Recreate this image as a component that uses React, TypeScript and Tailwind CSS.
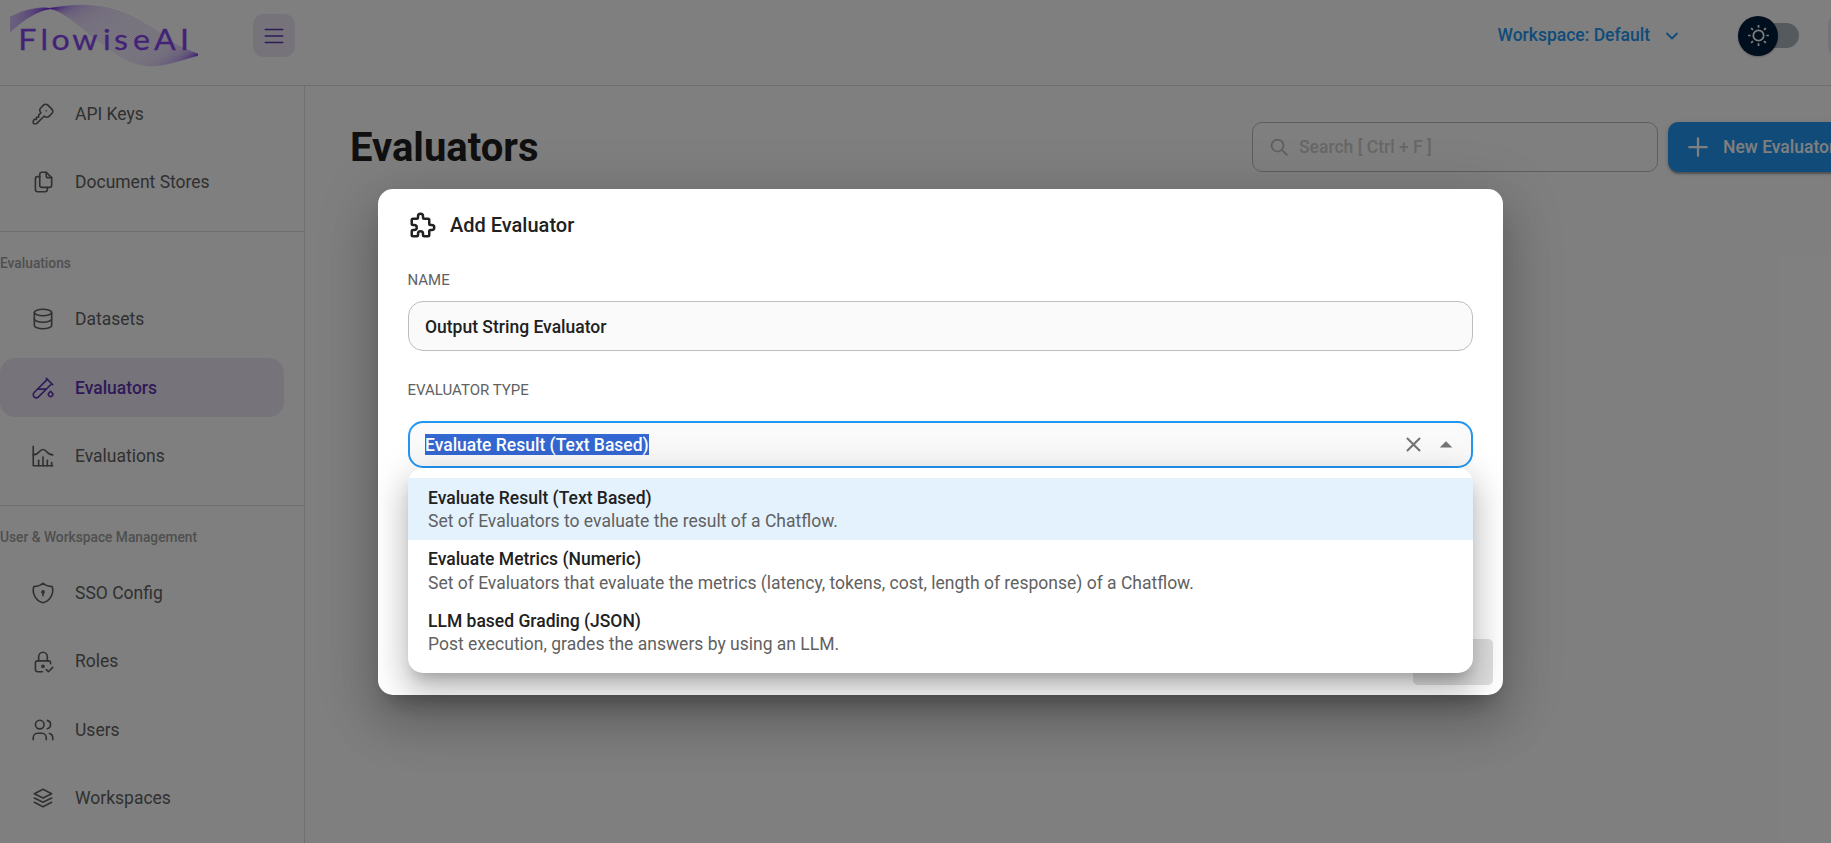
import type { ReactNode } from 'react'
import type { IconType } from 'react-icons'
import {
  TbChartHistogram,
  TbChevronDown,
  TbDatabase,
  TbFiles,
  TbKey,
  TbLockCheck,
  TbMenu2,
  TbPlus,
  TbPuzzle,
  TbSearch,
  TbShieldLock,
  TbStack2,
  TbTestPipe,
  TbUsers,
} from 'react-icons/tb'

type Point = [number, number]

const WAVE_A: Point[] = [[10, 32], [28, 18], [50, 8.5], [85, 5.3], [118, 11], [150, 27], [175, 44], [198, 54]]
const WAVE_B: Point[] = [[10, 17], [28, 10], [50, 8.5], [72, 20], [100, 42], [130, 61], [158, 65.5], [198, 55.5]]
const WAVE_LINES = 26

function smoothPath(points: Point[]): string {
  let d = `M${points[0][0]} ${points[0][1]}`
  for (let i = 0; i < points.length - 1; i++) {
    const p0 = points[Math.max(i - 1, 0)]
    const p1 = points[i]
    const p2 = points[i + 1]
    const p3 = points[Math.min(i + 2, points.length - 1)]
    d += `C${p1[0] + (p2[0] - p0[0]) / 6} ${p1[1] + (p2[1] - p0[1]) / 6} ${p2[0] - (p3[0] - p1[0]) / 6} ${
      p2[1] - (p3[1] - p1[1]) / 6
    } ${p2[0]} ${p2[1]}`
  }
  return d
}

const wavePaths = Array.from({ length: WAVE_LINES }, (_, n) => {
  const t = n / (WAVE_LINES - 1)
  return smoothPath(WAVE_A.map(([x, y], i): Point => [x + (WAVE_B[i][0] - x) * t, y + (WAVE_B[i][1] - y) * t]))
})

function Logo() {
  return (
    <svg width="210" height="76" viewBox="0 0 210 76" className="shrink-0">
      <g fill="none" stroke="#7c3aed" strokeOpacity="0.42" strokeWidth="0.5">
        {wavePaths.map((d) => (
          <path key={d} d={d} />
        ))}
      </g>
      <text
        transform="scale(1.12 1)"
        x="16.4 36.2 46 64.6 92 101.8 118.8 137.4 160.8"
        y="50"
        fontFamily="Lato, sans-serif"
        fontSize="28.7"
        fill="#8646ee"
        stroke="#8646ee"
        strokeWidth="0.3"
      >
        FlowiseAI
      </text>
    </svg>
  )
}

function NavItem({ icon: Icon, label, active = false }: { icon: IconType; label: string; active?: boolean }) {
  return (
    <div
      className={
        active
          ? 'mb-[10px] flex h-[58.45px] w-[284px] shrink-0 items-center rounded-[15px] bg-[#ede7f6] pl-[30px] font-medium text-[#5e35b1]'
          : 'mb-[10px] flex h-[58.45px] w-[284px] shrink-0 items-center rounded-[15px] pl-[30px] text-[#616161]'
      }
    >
      <Icon size={26} strokeWidth={1.5} className="shrink-0" />
      <span className="ml-[19px] text-[17.5px]">{label}</span>
    </div>
  )
}

function NavSection({ title, children }: { title: string; children: ReactNode }) {
  return (
    <section className="flex flex-col border-t border-[#dedede]">
      <h2 className="mt-[21px] mb-[16px] h-[21px] text-[13.75px] leading-[21px] font-medium text-[#9e9e9e]">{title}</h2>
      {children}
    </section>
  )
}

function Sidebar() {
  return (
    <nav className="flex w-[305px] shrink-0 flex-col overflow-hidden border-r border-[#dedede]">
      <div className="-mt-[1.5px] flex flex-col pb-[9.6px]">
        <NavItem icon={TbKey} label="API Keys" />
        <NavItem icon={TbFiles} label="Document Stores" />
      </div>
      <div className="flex flex-col pb-[9.65px]">
        <NavSection title="Evaluations">
          <NavItem icon={TbDatabase} label="Datasets" />
          <NavItem icon={TbTestPipe} label="Evaluators" active />
          <NavItem icon={TbChartHistogram} label="Evaluations" />
        </NavSection>
      </div>
      <NavSection title="User & Workspace Management">
        <NavItem icon={TbShieldLock} label="SSO Config" />
        <NavItem icon={TbLockCheck} label="Roles" />
        <NavItem icon={TbUsers} label="Users" />
        <NavItem icon={TbStack2} label="Workspaces" />
      </NavSection>
    </nav>
  )
}

function ThemeToggle() {
  return (
    <div className="ml-[56.5px] flex h-[25px] w-[61px] shrink-0 items-center rounded-full bg-gradient-to-r from-transparent from-20% to-[#aab4be] to-20%">
      <div className="flex size-10 shrink-0 items-center justify-center rounded-full bg-[#001e3c] shadow-[0_1px_2px_rgba(0,0,0,0.25)]">
        <svg width="25" height="25" viewBox="0 0 20 20" fill="#fff">
          <path d="M9.305 1.667V3.75h1.389V1.667h-1.39zm-4.707 1.95l-.982.982L5.09 6.072l.982-.982-1.473-1.473zm10.802 0L13.927 5.09l.982.982 1.473-1.473-.982-.982zM10 5.139a4.872 4.872 0 00-4.862 4.86A4.872 4.872 0 0010 14.862 4.872 4.872 0 0014.86 10 4.872 4.872 0 0010 5.139zm0 1.389A3.462 3.462 0 0113.471 10a3.462 3.462 0 01-3.473 3.472A3.462 3.462 0 016.527 10 3.462 3.462 0 0110 6.528zM1.665 9.305v1.39h2.083v-1.39H1.666zm14.583 0v1.39h2.084v-1.39h-2.084zM5.09 13.928L3.616 15.4l.982.982 1.473-1.473-.982-.982zm9.82 0l-.982.982 1.473 1.473.982-.982-1.473-1.473zM9.305 16.25v2.083h1.389V16.25h-1.39z" />
        </svg>
      </div>
    </div>
  )
}

function Header() {
  return (
    <header className="flex h-[86px] shrink-0 border-b border-[#dedede]">
      <Logo />
      <button className="mt-[14px] ml-[43px] flex h-[43px] w-[42px] shrink-0 items-center justify-center rounded-[10px] bg-[#ede7f6] text-[#5e35b1]">
        <TbMenu2 size={26} strokeWidth={1.5} />
      </button>
      <div className="ml-[1202.5px] flex h-[71px] shrink-0 items-center">
        <span className="w-[152px] text-[17.5px] font-medium whitespace-nowrap text-[#2196f3]">Workspace: Default</span>
        <TbChevronDown size={20} strokeWidth={2.2} className="ml-[12px] shrink-0 text-[#2196f3]" />
        <ThemeToggle />
        <div className="ml-[29px] h-[43px] w-[42px] shrink-0 rounded-[10px] bg-[#ede7f6]" />
      </div>
    </header>
  )
}

function MainArea() {
  return (
    <main className="flex min-w-0 flex-1 items-start overflow-hidden pt-[36px] pl-[45px]">
      <h1 className="mt-[1px] w-[902px] shrink-0 text-[40px] leading-[50px] font-bold text-[#212121]">Evaluators</h1>
      <div className="flex h-[50px] w-[406px] shrink-0 items-center rounded-[10px] border border-[#bdbdbd] pl-[16px]">
        <TbSearch size={20.5} strokeWidth={2} className="text-[#bdbdbd]" />
        <span className="ml-[9.5px] pt-[1px] text-[17.5px] font-medium text-[#cfcfcf]">Search [ Ctrl + F ]</span>
      </div>
      <button className="ml-[10px] flex h-[50px] w-[184px] shrink-0 items-center rounded-[10px] bg-[#2196f3] pl-[15px] text-white shadow-[0_4px_1px_-2px_rgba(0,0,0,0.2),0_2px_3px_0_rgba(0,0,0,0.14),0_1px_6px_0_rgba(0,0,0,0.12)]">
        <TbPlus size={30} strokeWidth={1.8} className="shrink-0" />
        <span className="ml-[10px] text-[17.5px] font-medium whitespace-nowrap">New Evaluator</span>
      </button>
    </main>
  )
}

const evaluatorTypes = [
  { title: 'Evaluate Result (Text Based)', description: 'Set of Evaluators to evaluate the result of a Chatflow.' },
  {
    title: 'Evaluate Metrics (Numeric)',
    description: 'Set of Evaluators that evaluate the metrics (latency, tokens, cost, length of response) of a Chatflow.',
  },
  { title: 'LLM based Grading (JSON)', description: 'Post execution, grades the answers by using an LLM.' },
]

function TypeMenu() {
  return (
    <ul className="absolute top-full left-0 z-10 h-[205px] w-full rounded-[15px] bg-white py-[10px] shadow-[0_10px_12.5px_-6px_rgba(0,0,0,0.2),0_20px_30px_2.5px_rgba(0,0,0,0.14),0_7.5px_37.5px_6px_rgba(0,0,0,0.12)]">
      {evaluatorTypes.map(({ title, description }, index) => (
        <li
          key={title}
          className={
            index === 0
              ? 'flex h-[61.7px] flex-col justify-center bg-[#e3f2fd] pt-[2.5px] pl-[20px]'
              : 'flex h-[61.7px] flex-col justify-center pt-[2px] pl-[20px]'
          }
        >
          <span className="text-[17.5px] leading-[23.5px] font-medium text-[#212121]">{title}</span>
          <span className="text-[17.5px] leading-[23.5px] text-[#616161]">{description}</span>
        </li>
      ))}
    </ul>
  )
}

function AddEvaluatorDialog() {
  return (
    <div
      role="dialog"
      className="flex h-[506px] w-[1125px] flex-col rounded-[15px] bg-white px-[30px] text-[#212121] shadow-[0_14px_19px_-9px_rgba(0,0,0,0.2),0_30px_47.5px_4px_rgba(0,0,0,0.14),0_11px_57.5px_10px_rgba(0,0,0,0.12)]"
    >
      <div className="mt-[21px] flex h-[30px] items-center">
        <TbPuzzle size={30} />
        <h2 className="ml-[12px] text-[20px] leading-[30px] font-medium">Add Evaluator</h2>
      </div>
      <label className="mt-[30px] -ml-[0.5px] h-[20px] text-[15px] leading-[20px] text-[#616161]">NAME</label>
      <div className="mt-[11px] flex h-[50px] shrink-0 items-center rounded-[15px] border border-[#bdbdbd] bg-[#fafafa] pl-[16px] text-[17.5px] font-medium">
        <span className="pt-[3px]">Output String Evaluator</span>
      </div>
      <label className="mt-[29px] -ml-[0.5px] h-[20px] text-[15px] leading-[20px] text-[#616161]">EVALUATOR TYPE</label>
      <div className="relative mt-[21px] flex h-[47px] shrink-0 items-center rounded-[15px] border-2 border-[#2196f3] bg-[#fafafa] pr-[10px] pl-[15px]">
        <span className="bg-[#3367d1] pt-[2px] text-[17.5px] leading-[19px] font-medium text-white">
          Evaluate Result (Text Based)
        </span>
        <svg width="25" height="25" viewBox="0 0 24 24" fill="#757575" className="ml-auto">
          <path d="M19 6.41L17.59 5 12 10.59 6.41 5 5 6.41 10.59 12 5 17.59 6.41 19 12 13.41 17.59 19 19 17.59 13.41 12z" />
        </svg>
        <svg width="30" height="30" viewBox="0 0 24 24" fill="#757575" className="ml-[5px] rotate-180">
          <path d="M7 10l5 5 5-5z" />
        </svg>
        <div className="pointer-events-none absolute -inset-x-[2px] -top-[2px] -bottom-[2px]">
          <TypeMenu />
        </div>
      </div>
      <div className="mt-[171px] -mr-[20px] h-[46px] w-[80px] shrink-0 self-end rounded-[5px] bg-[#e0e0e0]" />
    </div>
  )
}

export default function App() {
  return (
    <div className="relative h-[843px] w-full overflow-hidden bg-white font-['Roboto',sans-serif]">
      <div className="flex h-full flex-col">
        <Header />
        <div className="flex min-h-0 flex-1">
          <Sidebar />
          <MainArea />
        </div>
      </div>
      <div className="absolute inset-0 flex items-start justify-center bg-black/50 pt-[189px] pl-[50px]">
        <AddEvaluatorDialog />
      </div>
    </div>
  )
}
